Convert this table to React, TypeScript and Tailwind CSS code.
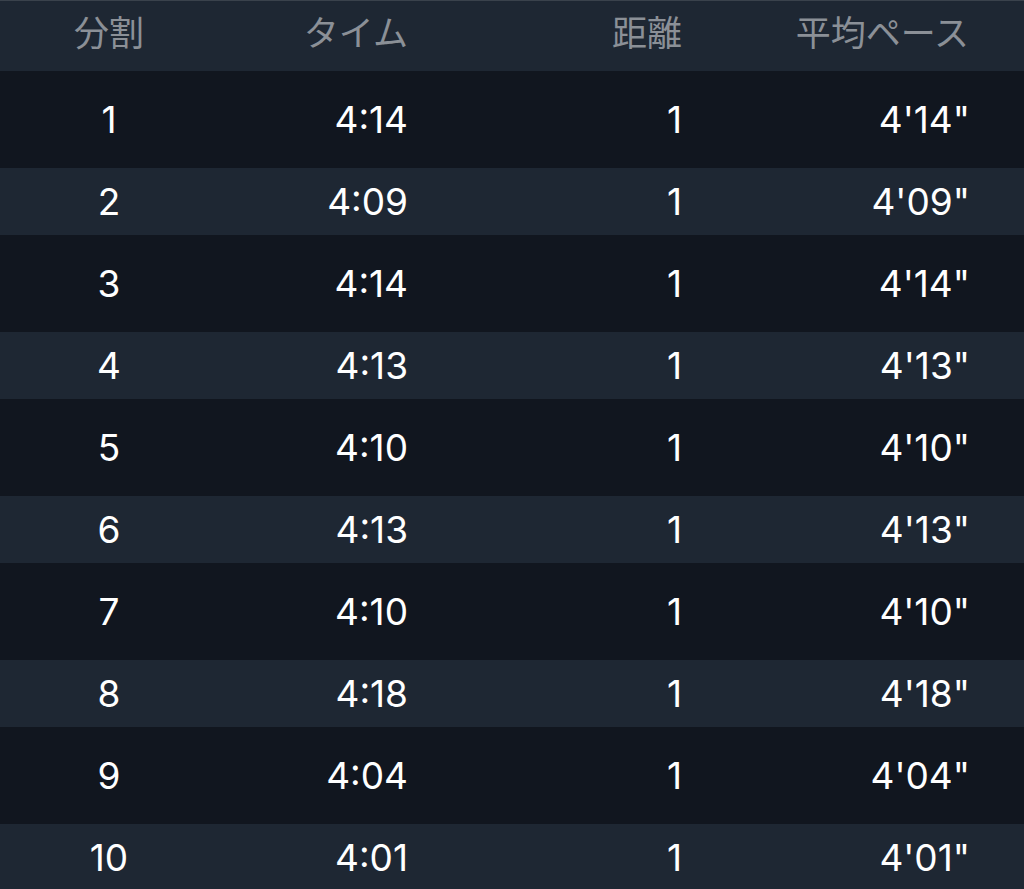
import React from "react";

const rows = [
  ["1", "4:14", "1", "4'14\""],
  ["2", "4:09", "1", "4'09\""],
  ["3", "4:14", "1", "4'14\""],
  ["4", "4:13", "1", "4'13\""],
  ["5", "4:10", "1", "4'10\""],
  ["6", "4:13", "1", "4'13\""],
  ["7", "4:10", "1", "4'10\""],
  ["8", "4:18", "1", "4'18\""],
  ["9", "4:04", "1", "4'04\""],
  ["10", "4:01", "1", "4'01\""],
];

export default function App() {
  return (
    <div className="w-[1024px] h-[889px] overflow-hidden bg-[#11161f]">
      <div className="grid grid-cols-[218px_190px_274px_287px] h-[71px] items-center bg-[#1e2733] border-t border-[#3a424c] pb-[12px] text-[35px] text-[#8b9097] [font-family:'Noto_Sans_CJK_JP',sans-serif] leading-none">
        <div className="text-center">分割</div>
        <div className="text-right">タイム</div>
        <div className="text-right">距離</div>
        <div className="text-right">平均ペース</div>
      </div>
      {rows.map((r, i) => (
        <div
          key={i}
          className={
            i % 2 === 0
              ? "grid grid-cols-[218px_190px_274px_288px] h-[97px] items-center bg-[#11161f] text-white text-[37px] leading-none [font-family:Inter,'Liberation_Sans',sans-serif]"
              : "grid grid-cols-[218px_190px_274px_288px] h-[67px] items-center bg-[#1e2733] text-white text-[37px] leading-none [font-family:Inter,'Liberation_Sans',sans-serif]"
          }
        >
          <div className="text-center">{r[0]}</div>
          <div className="text-right">{r[1]}</div>
          <div className="text-right">{r[2]}</div>
          <div className="text-right">{r[3]}</div>
        </div>
      ))}
    </div>
  );
}
